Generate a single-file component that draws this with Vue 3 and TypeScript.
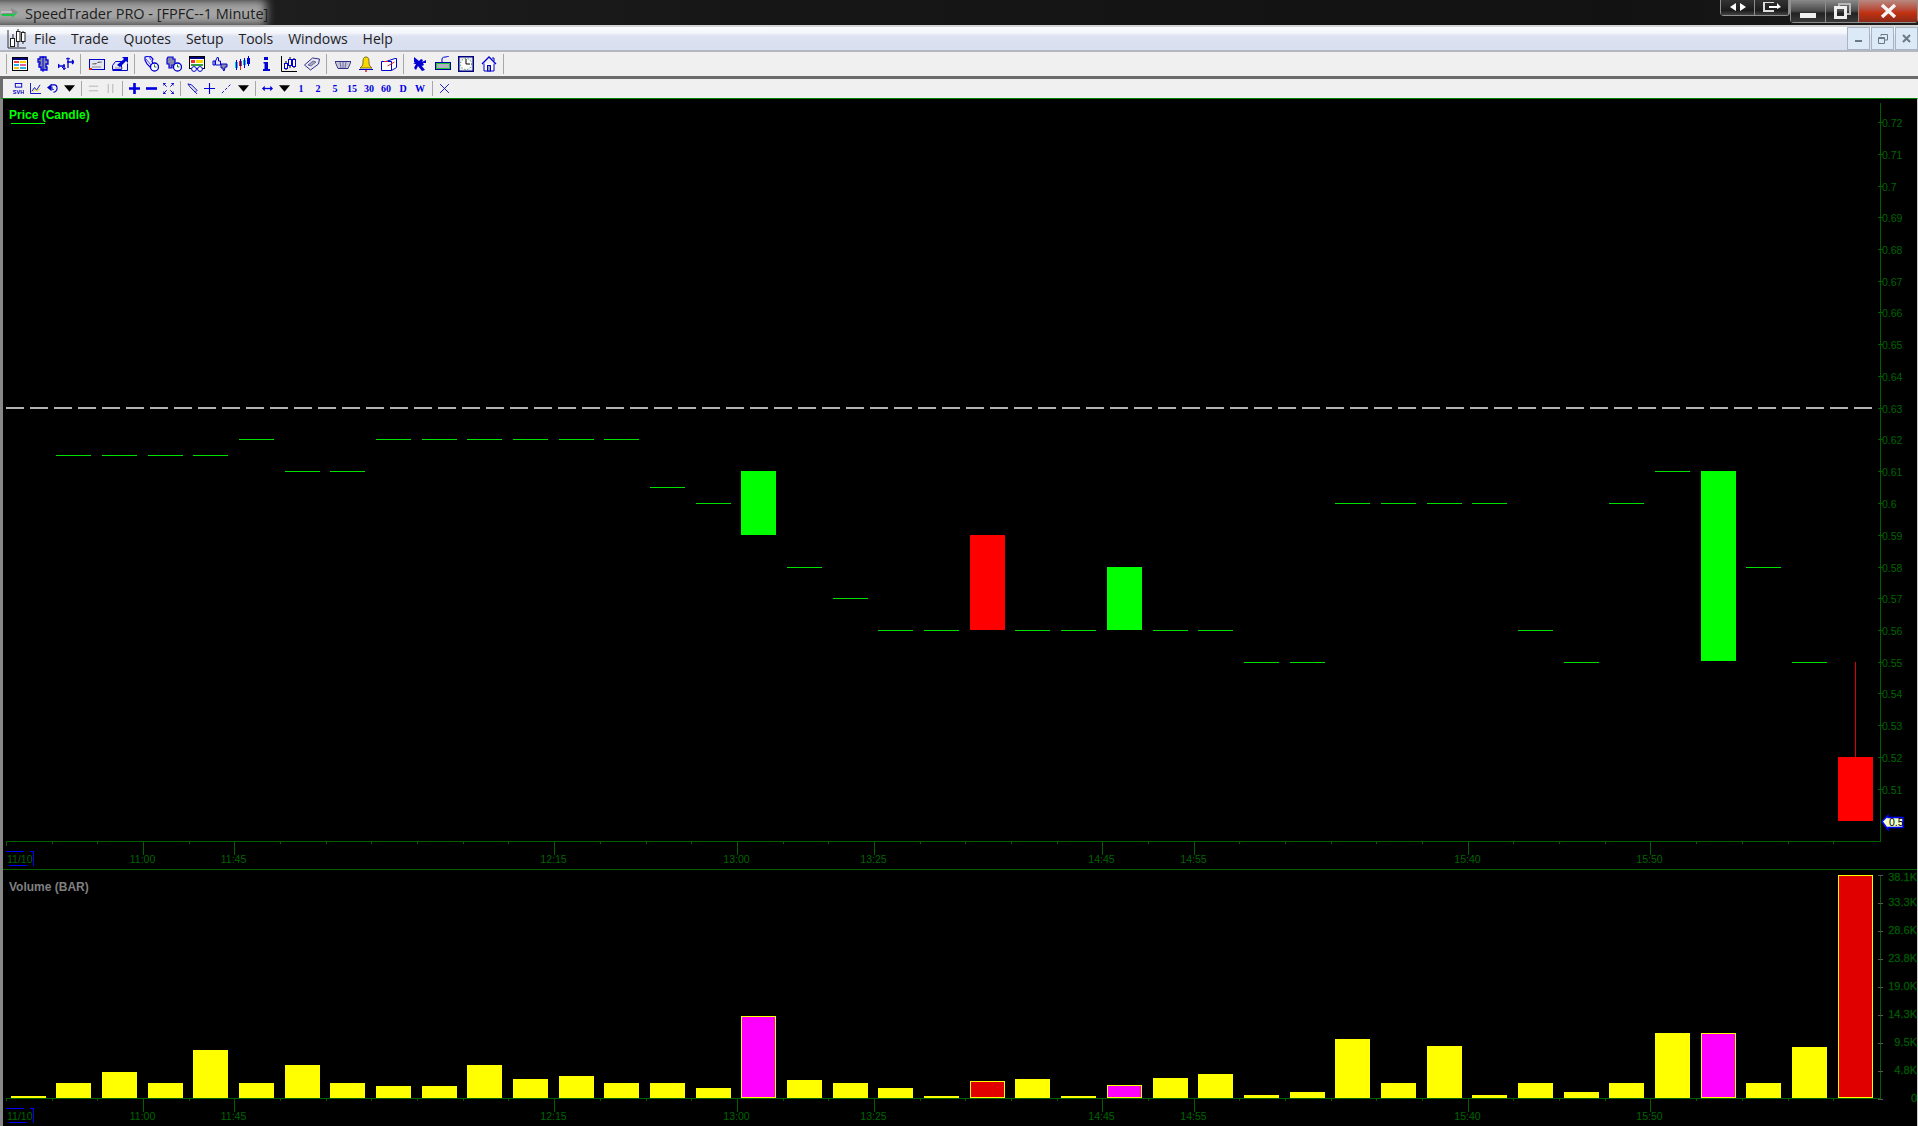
<script setup lang="ts">
type Candle = [number, number] | null

const menus = ['File', 'Trade', 'Quotes', 'Setup', 'Tools', 'Windows', 'Help']

// open/close per minute bar, null = no print in the price pane
const candles: Candle[] = [
  null,
  [0.615, 0.615], [0.615, 0.615], [0.615, 0.615], [0.615, 0.615],
  [0.62, 0.62], [0.61, 0.61], [0.61, 0.61],
  [0.62, 0.62], [0.62, 0.62], [0.62, 0.62], [0.62, 0.62], [0.62, 0.62], [0.62, 0.62],
  [0.605, 0.605], [0.6, 0.6], [0.59, 0.61], [0.58, 0.58], [0.57, 0.57],
  [0.56, 0.56], [0.56, 0.56], [0.59, 0.56], [0.56, 0.56], [0.56, 0.56], [0.56, 0.58],
  [0.56, 0.56], [0.56, 0.56], [0.55, 0.55], [0.55, 0.55],
  [0.6, 0.6], [0.6, 0.6], [0.6, 0.6], [0.6, 0.6],
  [0.56, 0.56], [0.55, 0.55], [0.6, 0.6], [0.61, 0.61], [0.55, 0.61],
  [0.58, 0.58], [0.55, 0.55], [0.52, 0.5],
]

const volumes = [
  2, 15, 26, 15, 48, 15, 33, 15, 12, 12, 33, 19, 22, 15, 15, 10, 82, 18, 15, 10, 2,
  17, 19, 2, 13, 20, 24, 3, 6, 59, 15, 52, 3, 15, 6, 15, 65, 65, 15, 51, 223,
]
const outlined: Record<number, string> = {
  16: '#ff00ff', 21: '#e00000', 24: '#ff00ff', 37: '#ff00ff', 40: '#e00000',
}

const slot = (i: number) => Math.floor(11 + 45.68 * i)
const tickX = (i: number) => Math.round(6 + 45.68 * i) + 0.5
const priceY = (p: number) => 122 + (0.72 - p) * 3175

const bodies = candles.flatMap((c, i) => {
  if (!c || c[0] === c[1]) return []
  const top = priceY(Math.max(c[0], c[1]))
  return [{ x: slot(i), y: Math.round(top), h: Math.round((Math.abs(c[0] - c[1])) * 3175), fill: c[1] > c[0] ? '#00ff00' : '#ff0000' }]
})
const dojis = candles.flatMap((c, i) => (c && c[0] === c[1] ? [{ x: slot(i), y: Math.round(priceY(c[0])) + 0.5 }] : []))

const priceTicks = Array.from({ length: 22 }, (_, i) => {
  const p = 72 - i
  return { y: Math.round(priceY(p / 100)) + 0.5, label: p === 70 ? '0.7' : p === 60 ? '0.6' : `0.${p}` }
})
const volTicks = ['38.1K', '33.3K', '28.6K', '23.8K', '19.0K', '14.3K', '9.5K', '4.8K', '0']
const timeLabels = [
  { i: 3, t: '11:00' }, { i: 5, t: '11:45' }, { i: 12, t: '12:15' }, { i: 16, t: '13:00' },
  { i: 19, t: '13:25' }, { i: 24, t: '14:45' }, { i: 26, t: '14:55' }, { i: 32, t: '15:40' }, { i: 36, t: '15:50' },
]
const allTicks = Array.from({ length: 41 }, (_, i) => tickX(i))
</script>

<template>
  <div class="window">
    <header class="titlebar">
      <div class="title">
        <svg class="app-icon" width="19" height="14" viewBox="0 0 19 14">
          <path d="M0 5h11V2l7 4-5 2H3z" fill="#8c8c8c" />
          <path d="M1 8h12l5-2-6 6v-2H2z" fill="#18c848" />
          <path d="M1 6h11" stroke="#f0f0f0" />
        </svg>
        <span class="title-text">SpeedTrader PRO - [FPFC--1 Minute]</span>
      </div>
      <div class="caption">
        <div class="caption-extra">
          <button class="cap-btn w-half">
            <svg width="18" height="12" viewBox="0 0 18 12"><path d="M7 1v8L1 5zM11 1v8l6-4z" fill="#fff" /></svg>
          </button>
          <button class="cap-btn w-half">
            <svg width="20" height="12" viewBox="0 0 20 12"><path d="M2 0v9h10M2 0h10" fill="none" stroke="#ddd" stroke-width="2" /><path d="M7 4h8V1l4 4-4 2v-1H7z" fill="#fff" /></svg>
          </button>
        </div>
        <div class="caption-main">
          <button class="cap-btn cap-min">
            <svg width="16" height="6" viewBox="0 0 16 6"><rect width="16" height="5" fill="#f0f0f0" /></svg>
          </button>
          <button class="cap-btn cap-max">
            <svg width="17" height="16" viewBox="0 0 17 16"><path d="M5 3V1h11v10h-3" fill="none" stroke="#b8b8b8" stroke-width="2" /><rect x="1.5" y="4.5" width="10" height="10" fill="none" stroke="#eee" stroke-width="3" /></svg>
          </button>
          <button class="cap-btn cap-close">
            <svg width="17" height="14" viewBox="0 0 17 14"><path d="M2 1l13 12M15 1L2 13" stroke="#f4f4f4" stroke-width="3.4" /></svg>
          </button>
        </div>
      </div>
    </header>

    <nav class="menubar">
      <svg class="menu-logo" width="20" height="22" viewBox="0 0 20 22">
        <path d="M1 2v18h18" fill="none" stroke="#333" />
        <path d="M6 6v13M11 1v18M16 3v13" stroke="#222" />
        <rect x="3.5" y="10.5" width="4" height="8" fill="#fff" stroke="#222" />
        <rect x="9.5" y="3.5" width="3.5" height="10" fill="#fff" stroke="#222" />
        <rect x="14.5" y="4.5" width="3.5" height="9" fill="#fff" stroke="#222" />
      </svg>
      <span v-for="m in menus" :key="m" class="menu-item">{{ m }}</span>
      <div class="mdi">
        <button class="mdi-btn"><svg width="8" height="8" viewBox="0 0 8 8"><rect y="5" width="7" height="2" fill="#6b7888" /></svg></button>
        <button class="mdi-btn"><svg width="10" height="10" viewBox="0 0 10 10"><path d="M3 2V0.5h6.5V6H7M0.5 3.5h6v6h-6zM0.5 4.5h6" fill="none" stroke="#6b7888" /></svg></button>
        <button class="mdi-btn"><svg width="9" height="9" viewBox="0 0 9 9"><path d="M1 1l7 7M8 1L1 8" stroke="#6b7888" stroke-width="2" /></svg></button>
      </div>
    </nav>

    <div class="toolbar tb-main">
      <i class="sep first" />
      <span class="slot"><svg viewBox="0 0 16 16"><rect x=".5" y="1.5" width="15" height="13" fill="#fff" stroke="#000" /><rect x="1" y="2" width="14" height="2" fill="#000080" /><rect x="2" y="5" width="5" height="2" fill="#f04040" /><rect x="2" y="8" width="5" height="2" fill="#20b0f0" /><rect x="2" y="11" width="5" height="2" fill="#e8c020" /><rect x="8" y="5" width="6" height="2" fill="#f0d000" /><rect x="8" y="8" width="6" height="2" fill="#e060a0" /><rect x="8" y="11" width="6" height="2" fill="#30b0e0" /></svg></span>
      <span class="slot"><svg viewBox="0 0 16 16"><path d="M5 1h6v3h2v4h-2v3h1v3H6v-3H4V8h1V6H3V3h2z" fill="#8a8aa8" stroke="#0000e0" stroke-width="1.3" /><path d="M8 0v16" stroke="#0000d0" /></svg></span>
      <span class="slot"><svg viewBox="0 0 16 16"><path d="M0 10h7M1 12l-1-2 1-2M15 6H9M14 4l2 2-2 2M6 8v6M10 2v10" fill="none" stroke="#0000d0" stroke-width="1.3" /><path d="M8 3l2-1 2 1M4 11l2 2 2-1" fill="none" stroke="#0000d0" /></svg></span>
      <i class="sep" />
      <span class="slot"><svg viewBox="0 0 16 16"><rect x=".5" y="3.5" width="15" height="10" fill="#e6e6f0" stroke="#0000d0" /><path d="M3 8h4l2-2h4M3 11h9" stroke="#8a8a9a" /><path d="M0 12h3v2H0z" fill="#e02020" /></svg></span>
      <span class="slot"><svg viewBox="0 0 16 16"><path d="M.5 9.5l3-4h6v8h-9z" fill="#e6e6f0" stroke="#0000d0" /><path d="M.5 14.5h15v-7" fill="none" stroke="#0000d0" /><path d="M5 9l7-6-2-2h6v6l-2-2-6 6z" fill="#0000d0" /><path d="M3 12h8" stroke="#8a8a9a" /></svg></span>
      <i class="sep" />
      <span class="slot"><svg viewBox="0 0 16 16"><path d="M2 1l5-1 3 3-1 2 1 3-3 3-3-3-2-4z" fill="#eef" stroke="#0000e0" stroke-width="1.2" /><path d="M3 3l5 6M6 1l2 3" stroke="#0000e0" stroke-width=".7" /><circle cx="11.500" cy="11" r="4" fill="#fff" stroke="#0000d0" stroke-width="1.3" /><path d="M11.500 8.500V11h2" fill="none" stroke="#208020" /></svg></span>
      <span class="slot"><svg viewBox="0 0 16 16"><path d="M2 1h5v2h2v6H6v3H3V8H1V3z" fill="#8a8aa8" stroke="#0000e0" stroke-width="1.2" /><circle cx="11.500" cy="11" r="4" fill="#fff" stroke="#0000d0" stroke-width="1.3" /><path d="M11.500 8.500V11h2" fill="none" stroke="#208020" /></svg></span>
      <span class="slot"><svg viewBox="0 0 16 16"><rect x=".5" y=".5" width="15" height="12" fill="#fff" stroke="#000" /><rect x="1" y="1" width="14" height="2" fill="#000080" /><rect x="2" y="4" width="4" height="3" fill="#f03030" /><rect x="7" y="4" width="7" height="3" fill="#f8d800" /><rect x="2" y="8" width="12" height="2" fill="#30a040" /><circle cx="5" cy="13" r="2.4" fill="#fff" stroke="#0000d0" /><circle cx="11" cy="13" r="2.4" fill="#fff" stroke="#0000d0" /></svg></span>
      <span class="slot"><svg viewBox="0 0 16 16"><path d="M1 5h2v4H1zM3.500 5l2-4 1 1v3h2v4h-5z" fill="#e6e6f0" stroke="#0000d0" /><path d="M9 8h6v3h-2v1l-1 3-1-1v-2H9z" fill="#8a8aa0" stroke="#0000d0" /></svg></span>
      <span class="slot"><svg viewBox="0 0 16 16"><rect y="6" width="3" height="6" fill="#00c8e0" /><rect x="4" y="5" width="3" height="5" fill="#f02020" /><rect x="8" y="4" width="3" height="5" fill="#00c8e0" /><rect x="12" y="2" width="3" height="6" fill="#0000e0" /><path d="M1.500 4v10M5.500 3v11M9.500 2v10M13.500 0v10" stroke="#0000d0" /><path d="M5.500 10v4" stroke="#f02020" /></svg></span>
      <span class="slot"><svg viewBox="0 0 16 16"><path d="M6 1h4v3H6zM5.500 6h4.500v7h2v2H5v-2h1.500V7.500H5.500z" fill="#0000d0" /></svg></span>
      <span class="slot"><svg viewBox="0 0 16 16"><path d="M.5 0v15.500H16" fill="none" stroke="#000" /><path d="M5 5v9M9 1v11M13 2v10" stroke="#000" /><rect x="3.500" y="7.500" width="3" height="5" fill="#fff" stroke="#0000d0" /><rect x="7.500" y="3.500" width="3" height="6" fill="#fff" stroke="#0000d0" /><rect x="11.500" y="3.500" width="3" height="7" fill="#fff" stroke="#0000d0" /></svg></span>
      <span class="slot"><svg viewBox="0 0 16 16"><path d="M.5 9l8-7 7 1-1 5-8 6z" fill="#e8e8ee" stroke="#30308a" /><path d="M4 9l5-4 3 1-5 4z" fill="#a8a8b8" stroke="#30308a" stroke-width=".6" /></svg></span>
      <i class="sep" />
      <span class="slot"><svg viewBox="0 0 16 16"><path d="M0 5.500h16l-3 7H3z" fill="#fff" stroke="#30308a" /><path d="M1 7h14M2 9h12M3 11h10" stroke="#9090a8" /><path d="M5 6l1 6M8 6v6M11 6l-1 6" stroke="#30308a" stroke-width=".6" /></svg></span>
      <span class="slot"><svg viewBox="0 0 16 16"><path d="M8 1c3 0 3 3 3 6s2 4 3 5H2c1-1 3-2 3-5s0-6 3-6z" fill="#f8d800" stroke="#605000" stroke-width=".8" /><path d="M1 13h14v1H1z" fill="#0000d0" /><circle cx="8" cy="15" r="1" fill="#e02020" /></svg></span>
      <span class="slot"><svg viewBox="0 0 16 16"><path d="M.5 5.500h10v9H.5zM5 5.500l9-3h1.500v9l-5 3" fill="#fff" stroke="#0000d0" /><path d="M3 5.500h4M6.500 10l7-4" stroke="#e02020" /></svg></span>
      <i class="sep" />
      <span class="slot"><svg viewBox="0 0 16 16"><path d="M2 1l5 4 2-2 2 1-1 2 4-2v3h-3l1 2-2 1-1-1 4 5-3 1-4-5-2 4-2-2 2-4H1l2-1-1-1z" fill="#0000d0" /></svg></span>
      <span class="slot"><svg viewBox="0 0 16 16"><rect x=".5" y="6.500" width="15" height="7" fill="#18c838" stroke="#0000a0" /><rect x="2" y="8" width="12" height="4" fill="#b0b0c0" /><path d="M7 6V3c0-2 3-2 4-2s2-1 3-1" fill="none" stroke="#0000d0" /></svg></span>
      <span class="slot"><svg viewBox="0 0 16 16"><rect x=".75" y=".75" width="14.500" height="14.500" fill="#e8e8ee" stroke="#000080" stroke-width="1.500" /><circle cx="8" cy="8" r="5.500" fill="#fff" stroke="#108828" stroke-dasharray="1 2" /><path d="M8 3v5h4" fill="none" stroke="#000" /></svg></span>
      <span class="slot"><svg viewBox="0 0 16 16"><path d="M1 8l7-7 7 7" fill="none" stroke="#0000d0" stroke-width="1.300" /><path d="M3 7.500v7.500h10V7.500" fill="#fff" stroke="#0000d0" /><rect x="6.500" y="9.500" width="3" height="5.500" fill="#a0a0b0" stroke="#0000d0" /><path d="M11 2h2v3" fill="none" stroke="#0000d0" /></svg></span>
      <i class="sep last" />
    </div>

    <div class="toolbar tb-chart">
      <span class="mini"><svg viewBox="0 0 12 12"><rect x="2.500" y=".5" width="7" height="4" fill="none" stroke="#0000c0" /><text x="6" y="11.500" class="svh">SVH</text></svg></span>
      <span class="mini"><svg viewBox="0 0 12 12"><path d="M.5 0v11.500H12" fill="none" stroke="#0000c0" /><path d="M2 9l3-4 2 3 4-6" fill="none" stroke="#0000c0" /><path d="M3 10l3-3 2 2 3-3" fill="none" stroke="#e8d000" /></svg></span>
      <span class="mini"><svg viewBox="0 0 12 12"><path d="M4 2h4c2 0 3 2 3 4s-2 4-4 4" fill="none" stroke="#0000c0" stroke-width="1.200" /><path d="M0 5l5-4v8z" fill="#0000c0" /><path d="M5.500 4v3h2" fill="none" stroke="#0000c0" /></svg></span>
      <span class="mini"><svg viewBox="0 0 10 6"><path d="M0 0h10L5 6z" fill="#000" /></svg></span>
      <i class="sep small" />
      <span class="mini"><svg viewBox="0 0 12 12"><path d="M1 3.500h10M1 8.500h10" stroke="#b0b0b0" /></svg></span>
      <span class="mini"><svg viewBox="0 0 12 12"><path d="M3.500 1v10M8.500 1v10" stroke="#b0b0b0" /></svg></span>
      <i class="sep small" />
      <span class="mini"><svg viewBox="0 0 10 10"><path d="M0 5h10M5 0v10" stroke="#0000e0" stroke-width="2.400" /></svg></span>
      <span class="mini"><svg viewBox="0 0 10 10"><path d="M0 5h10" stroke="#0000e0" stroke-width="2.400" /></svg></span>
      <span class="mini"><svg viewBox="0 0 12 12"><path d="M0 3V.5h3M9 .5h3V3M0 9v2.500h3M9 11.500h3V9M1 1l3 3M11 1L8 4M1 11l3-3M11 11L8 8" fill="none" stroke="#0000c0" /></svg></span>
      <i class="sep small" />
      <span class="mini"><svg viewBox="0 0 12 12"><path d="M1 1l4 1 6 6-2 2-6-6zM9 10l2 2" fill="#e0e0ea" stroke="#0000c0" /></svg></span>
      <span class="mini"><svg viewBox="0 0 10 10"><path d="M0 5h10M5 0v10" stroke="#0000e0" /></svg></span>
      <span class="mini"><svg viewBox="0 0 12 12"><path d="M1 11L11 1" stroke="#0000c0" stroke-dasharray="3 2" /></svg></span>
      <span class="mini"><svg viewBox="0 0 10 6"><path d="M0 0h10L5 6z" fill="#000" /></svg></span>
      <i class="sep small" />
      <span class="mini"><svg viewBox="0 0 12 12"><path d="M1 6h10" stroke="#0000e0" stroke-width="1.400" /><path d="M0 6l3-3v6zM12 6L9 3v6z" fill="#0000e0" /></svg></span>
      <span class="mini"><svg viewBox="0 0 10 6"><path d="M0 0h10L5 6z" fill="#000" /></svg></span>
      <span v-for="t in ['1', '2', '5', '15', '30', '60', 'D', 'W']" :key="t" class="mini period">{{ t }}</span>
      <i class="sep small" />
      <span class="mini"><svg viewBox="0 0 10 10"><path d="M1 1l8 8M9 1L1 9" stroke="#0000c0" stroke-width=".8" /></svg></span>
    </div>

    <main class="chart">
      <svg class="pane price-pane" width="1914" height="771" viewBox="3 99 1914 771" shape-rendering="crispEdges">
        <text x="9" y="119" class="pane-title lime">Price (Candle)</text>
        <path d="M11 123.500h34" stroke="#00ff00" />

        <path d="M6 408H1873" stroke="#b4b4b4" stroke-width="2" stroke-dasharray="18 6" />

        <path v-for="d in dojis" :key="`d${d.x}`" :d="`M${d.x} ${d.y}h35`" stroke="#00e000" />
        <rect v-for="b in bodies" :key="`b${b.x}`" :x="b.x" :y="b.y" width="35" :height="b.h" :fill="b.fill" />
        <path d="M1855.500 662V757" stroke="#e00000" />

        <path d="M1880.500 103V841.500H6V846" fill="none" stroke="#006000" />
        <path d="M6.500 841v2" stroke="#006000" />
        <path v-for="x in allTicks" :key="`pt${x}`" :d="`M${x} 841v3`" stroke="#006000" />
        <path v-for="l in timeLabels" :key="`pl${l.i}`" :d="`M${tickX(l.i)} 841v14`" stroke="#006000" />
        <path v-for="t in priceTicks" :key="`py${t.y}`" :d="`M1878 ${t.y}h5`" stroke="#006000" />

        <text v-for="t in priceTicks" :key="`pv${t.y}`" x="1882" :y="t.y + 4" class="axis">{{ t.label }}</text>
        <text v-for="l in timeLabels" :key="`px${l.i}`" :x="tickX(l.i) - 1" y="863" class="axis mid">{{ l.t }}</text>

        <g class="date-flag">
          <path d="M6 851.500h18M9 865.500h18M33.500 851v15M30 851.500h4" stroke="#0000ff" fill="none" />
          <text x="7" y="863" class="axis">11/10</text>
        </g>

        <path d="M1882 821.500l6-6v2h15v10h-15v2z" fill="#f0ffc8" stroke="#0000ff" stroke-width="1.500" shape-rendering="auto" />
        <text x="1889" y="826" class="marker">0.5</text>

        <path d="M3 869.500H1917" stroke="#006000" />
      </svg>

      <svg class="pane vol-pane" width="1914" height="256" viewBox="3 870 1914 256" shape-rendering="crispEdges">
        <text x="9" y="891" class="pane-title gray">Volume (BAR)</text>

        <template v-for="(v, i) in volumes" :key="`v${i}`">
          <rect
            v-if="outlined[i]"
            :x="slot(i) + 0.5"
            :y="1098 - v + 0.5"
            width="34"
            :height="v - 1"
            :fill="outlined[i]"
            stroke="#ffff00"
          />
          <rect v-else :x="slot(i)" :y="1098 - v" width="35" :height="v" fill="#ffff00" />
        </template>

        <path d="M1880.500 875V1098.500H6V1101" fill="none" stroke="#006000" />
        <path v-for="x in allTicks" :key="`vt${x}`" :d="`M${x} 1098v3`" stroke="#006000" />
        <path v-for="l in timeLabels" :key="`vl${l.i}`" :d="`M${tickX(l.i)} 1098v14`" stroke="#006000" />
        <path v-for="(t, i) in volTicks" :key="`vy${t}`" :d="`M1878 ${875.5 + i * 28}h5`" stroke="#555" />

        <text v-for="(t, i) in volTicks" :key="`vv${t}`" x="1917" :y="(i === 0 ? 881 : 878) + i * 28" class="axis end heavy">{{ t }}</text>
        <text v-for="l in timeLabels" :key="`vx${l.i}`" :x="tickX(l.i) - 1" y="1120" class="axis mid">{{ l.t }}</text>

        <g class="date-flag">
          <path d="M6 1108.500h18M9 1122.500h18M33.500 1108v15M30 1108.500h4" stroke="#0000ff" fill="none" />
          <text x="7" y="1120" class="axis">11/10</text>
        </g>
      </svg>
    </main>
  </div>
</template>

<style>
html,
body {
  margin: 0;
  background: #000;
}
</style>

<style scoped>
.window {
  width: 1918px;
  height: 1126px;
  display: flex;
  flex-direction: column;
  overflow: hidden;
  background: #000;
  font-family: "Open Sans", "Liberation Sans", sans-serif;
}

.titlebar {
  height: 25px;
  flex: none;
  display: flex;
  justify-content: space-between;
  align-items: flex-start;
  background: linear-gradient(90deg, #222 0%, #161616 40%, #121212 85%, #1c1c1c 100%);
  border-bottom: 2px solid #d4d4d4;
}

.title {
  position: relative;
  display: flex;
  align-items: center;
  height: 25px;
}

.title::before {
  content: '';
  position: absolute;
  left: -12px;
  top: 0;
  width: 278px;
  height: 25px;
  background: #a4a4a4;
  filter: blur(5px);
}

.app-icon {
  position: relative;
  margin-right: 6px;
}

.title-text {
  position: relative;
  top: 1px;
  font-size: 14.5px;
  color: #1c1c1c;
  white-space: nowrap;
}

.caption {
  display: flex;
  align-items: flex-start;
}

.caption-extra,
.caption-main {
  display: flex;
  border: 1px solid #909090;
  border-top: 0;
  border-radius: 0 0 4px 4px;
  box-sizing: border-box;
}

.caption-extra {
  height: 16px;
  width: 70px;
}

.caption-main {
  height: 23px;
  width: 128px;
}

.cap-btn {
  border: 0;
  padding: 0;
  display: flex;
  align-items: center;
  justify-content: center;
  background: linear-gradient(#8a8a8a, #4a4a4a 50%, #222 60%, #3a3a3a);
  border-right: 1px solid #8c8c8c;
}

.w-half {
  width: 50%;
  background: linear-gradient(#333, #1c1c1c 70%, #444);
  overflow: hidden;
}

.cap-min {
  width: 35px;
  align-items: flex-end;
  padding-bottom: 3px;
  box-sizing: border-box;
}

.cap-max {
  width: 33px;
}

.cap-close {
  flex: 1;
  border-right: 0;
  background: linear-gradient(#b88a80, #b85040 40%, #c03010 60%, #8a2a18);
}

.menubar {
  height: 25px;
  flex: none;
  display: flex;
  align-items: center;
  position: relative;
  background: linear-gradient(#fbfcfe 0, #f4f6fb 25%, #dde2f1 40%, #d8dff0 100%);
  border-bottom: 2px solid #b4b6c0;
  box-sizing: border-box;
}

.menu-logo {
  margin: 0 7px 0 7px;
}

.menu-item {
  font-size: 14px;
  color: #222;
  margin-right: 14.9px;
}

.mdi {
  margin-left: auto;
  display: flex;
  gap: 1px;
  height: 23px;
}

.mdi-btn {
  width: 23px;
  height: 23px;
  padding: 0;
  background: #dce9f6;
  border: 1px solid #a8b4c4;
  display: flex;
  align-items: center;
  justify-content: center;
}

.toolbar {
  flex: none;
  display: flex;
  align-items: center;
  background: #f0f0f0;
}

.tb-main {
  height: 24px;
  padding-left: 6px;
  border-bottom: 3px solid #6c6c6c;
  box-sizing: content-box;
}

.tb-chart {
  height: 19px;
  padding-left: 6.5px;
  border-left: 3px solid #6c6c6c;
  box-sizing: border-box;
}

.slot {
  width: 23px;
  height: 16px;
  display: flex;
  justify-content: center;
}

.slot svg {
  width: 16px;
  height: 16px;
}

.mini {
  width: 17px;
  height: 12px;
  display: flex;
  justify-content: center;
  align-items: center;
}

.mini svg {
  width: 11px;
  height: 11px;
}

.period {
  font: bold 10px "Liberation Serif", serif;
  color: #0000e0;
}

.sep {
  display: block;
  width: 1px;
  height: 20px;
  background: #a8a8a8;
  margin: 0 4px 0 3px;
}

.sep.first {
  margin: 0 1px 0 0;
}

.sep.small {
  height: 15px;
  margin: 0 3px;
}

.svh {
  font: bold 6px "Liberation Sans", sans-serif;
  text-anchor: middle;
  fill: #0000c0;
}

.chart {
  flex: none;
  display: flex;
  flex-direction: column;
  height: 1028px;
  box-sizing: border-box;
  border-top: 1px solid #008000;
  border-left: 3px solid #888;
  border-right: 1px solid #ccc;
}

.pane {
  display: block;
  flex: none;
  background: #000;
  overflow: visible;
}

.pane-title {
  font: bold 12px "Liberation Sans", sans-serif;
  shape-rendering: auto;
}

.lime {
  fill: #00ff00;
}

.gray {
  fill: #808080;
}

.axis {
  font: 10.5px "Liberation Sans", sans-serif;
  fill: #006400;
}

.mid {
  text-anchor: middle;
}

.end {
  text-anchor: end;
}

.heavy {
  font-size: 11px;
  stroke: #004c00;
  stroke-width: 0.3px;
}

.marker {
  font: 10.5px "Liberation Sans", sans-serif;
  fill: #000;
}
</style>
